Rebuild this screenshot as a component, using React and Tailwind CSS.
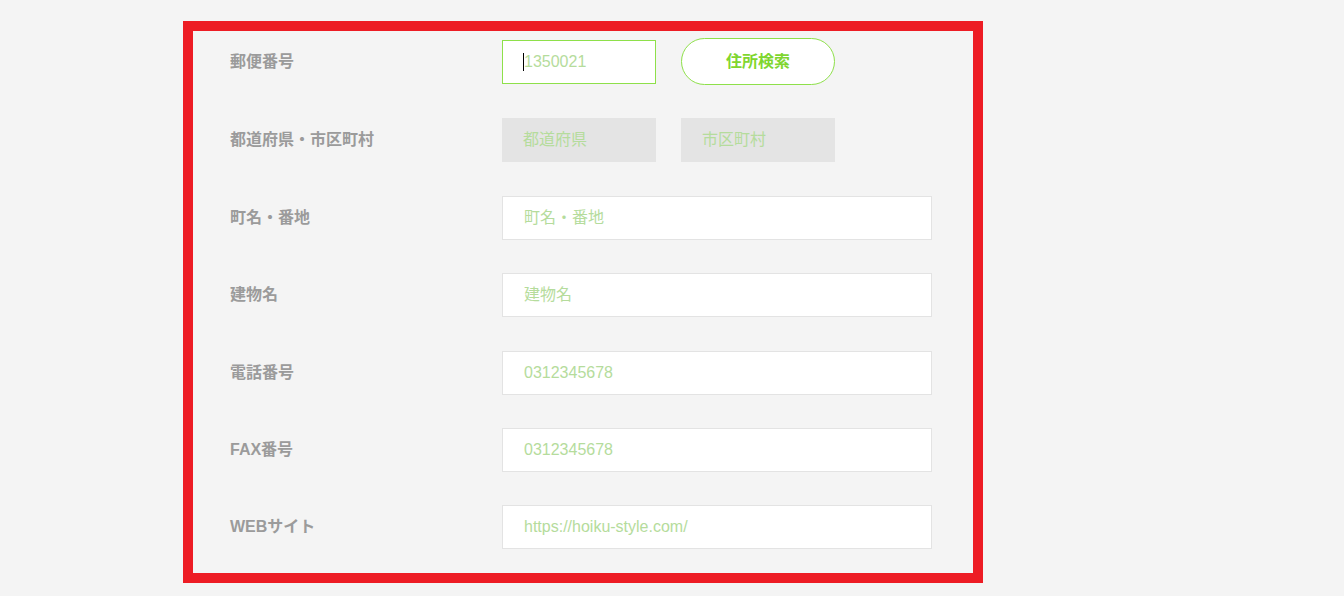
const fields = [
  { label: "町名・番地", placeholder: "町名・番地" },
  { label: "建物名", placeholder: "建物名" },
  { label: "電話番号", placeholder: "0312345678" },
  { label: "FAX番号", placeholder: "0312345678" },
  { label: "WEBサイト", placeholder: "https://hoiku-style.com/" },
];

const font = { fontFamily: '"Liberation Sans", "Noto Sans CJK JP", sans-serif' };

function Label({ children }) {
  return (
    <div className="w-[272px] shrink-0 text-[16px] font-bold text-[#9b9b9b]">
      {children}
    </div>
  );
}

function TextInput({ placeholder, className = "" }) {
  return (
    <input
      type="text"
      placeholder={placeholder}
      className={`h-[44px] bg-white border border-[#e3e3e3] px-[21px] text-[16px] outline-none placeholder:text-[#b5dc9c] ${className}`}
    />
  );
}

export default function App() {
  return (
    <div className="min-h-[596px] w-full bg-[#f4f4f4] pt-[21px]" style={font}>
      <div className="ml-[183px] w-[800px] border-[10px] border-[#ed1c24] pl-[37px] pt-[7px] pb-[24px]">
        <div className="flex flex-col gap-[33.4px]">
          <div className="flex items-center h-[47px]">
            <Label>郵便番号</Label>
            <div className="relative">
              <input
                type="text"
                placeholder="1350021"
                className="h-[44px] w-[154px] bg-white border border-[#8ee04a] px-[21px] text-[16px] outline-none placeholder:text-[#b5dc9c]"
              />
              <span className="absolute left-[21px] top-[13px] h-[18px] w-px bg-black" />
            </div>
            <button className="ml-[25px] h-[47px] w-[154px] rounded-[24px] border border-[#8ee04a] bg-white text-[16px] font-bold text-[#7fd62f]">
              住所検索
            </button>
          </div>
          <div className="flex items-center">
            <Label>都道府県・市区町村</Label>
            <div className="flex h-[44px] w-[154px] items-center bg-[#e4e4e4] px-[21px] text-[16px] text-[#b5dc9c]">
              都道府県
            </div>
            <div className="ml-[25px] flex h-[44px] w-[154px] items-center bg-[#e4e4e4] px-[21px] text-[16px] text-[#b5dc9c]">
              市区町村
            </div>
          </div>
          {fields.map((f) => (
            <div key={f.label} className="flex items-center">
              <Label>{f.label}</Label>
              <TextInput placeholder={f.placeholder} className="w-[430px]" />
            </div>
          ))}
        </div>
      </div>
    </div>
  );
}
